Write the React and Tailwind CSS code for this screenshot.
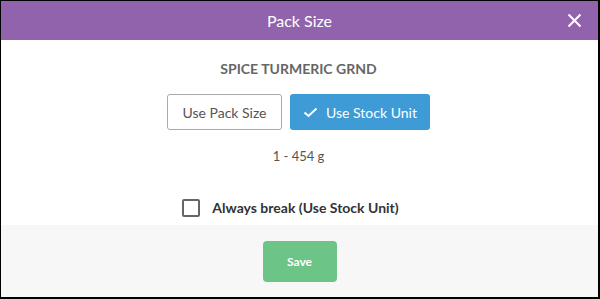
import React, { useState } from 'react'

export default function App() {
  const [mode, setMode] = useState('stock')
  const [always, setAlways] = useState(false)

  return (
    <div
      className="w-[600px] h-[299px] border border-black border-r-2 border-b-2 bg-white flex flex-col"
      style={{ fontFamily: 'Lato, "Open Sans", sans-serif' }}
    >
      <div className="h-[39px] bg-[#9263ad] flex items-center justify-center relative shrink-0">
        <h2 className="text-[16px] text-white">Pack Size</h2>
        <button type="button" className="absolute right-[16px] top-[12px] text-white">
          <svg width="15" height="15" viewBox="0 0 15 15">
            <path d="M1.5 1.5 L13.5 13.5 M13.5 1.5 L1.5 13.5" stroke="white" strokeWidth="2" />
          </svg>
        </button>
      </div>

      <div className="flex flex-col items-center pt-[21px] h-[185px] shrink-0 pr-[2px]">
        <p className="text-[14px] font-bold text-[#666] leading-[16px]">SPICE TURMERIC GRND</p>
        <div className="flex gap-[8px] mt-[17px]">
          <button
            type="button"
            onClick={() => setMode('pack')}
            className="w-[115px] h-[36px] border border-[#aaa] rounded-[3px] bg-white text-[14px] text-[#555]"
          >
            Use Pack Size
          </button>
          <button
            type="button"
            onClick={() => setMode('stock')}
            className="w-[140px] h-[36px] rounded-[3px] bg-[#3e9bd5] text-[14px] text-white flex items-center justify-center gap-[8px]"
          >
            {mode === 'stock' && (
              <svg width="15" height="11" viewBox="0 0 15 11">
                <path d="M1.5 5.5 L5.5 9 L13.5 1.5" fill="none" stroke="white" strokeWidth="2" />
              </svg>
            )}
            Use Stock Unit
          </button>
        </div>
        <p className="text-[13px] text-[#555] mt-[18px] leading-[16px]">1 - 454 g</p>
        <label className="flex items-center gap-[12px] mt-[33px] mr-[16px] cursor-pointer">
          <span
            onClick={() => setAlways(!always)}
            className="w-[18px] h-[18px] border-2 border-[#666] rounded-[2px] bg-white"
          />
          <span className="text-[14px] font-bold text-[#333]">Always break (Use Stock Unit)</span>
        </label>
      </div>

      <div className="flex-1 bg-[#f7f7f7] flex justify-center pt-[16px]">
        <button
          type="button"
          className="w-[74px] h-[41px] rounded-[4px] bg-[#6cc486] text-white text-[12px] font-bold"
        >
          Save
        </button>
      </div>
    </div>
  )
}
